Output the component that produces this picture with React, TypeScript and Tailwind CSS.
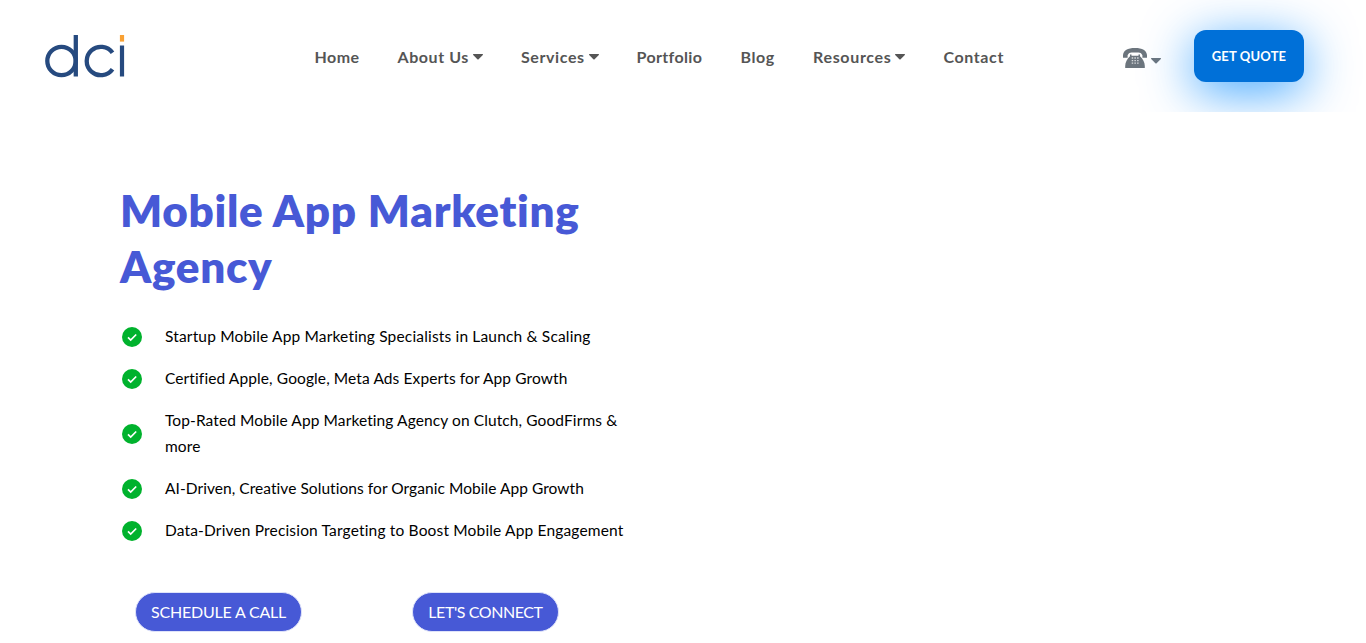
import React from "react";

const nav: { label: string; menu?: boolean; box: string; text: string }[] = [
  { label: "Home", box: "w-[83px]", text: "tracking-[0.45px]" },
  { label: "About Us", menu: true, box: "w-[123.500px]", text: "tracking-[0.57px]" },
  { label: "Services", menu: true, box: "w-[115.500px]", text: "tracking-[0.6px]" },
  { label: "Portfolio", box: "w-[104px]", text: "tracking-[0.35px]" },
  { label: "Blog", box: "w-[72.500px]", text: "tracking-[0.6px]" },
  { label: "Resources", menu: true, box: "w-[130.500px]", text: "tracking-[0.67px]" },
  { label: "Contact", box: "w-[61px]", text: "tracking-[0.6px]" },
];

const points: { text: string; className: string }[] = [
  { text: "Startup Mobile App Marketing Specialists in Launch & Scaling", className: "tracking-[0.17px]" },
  { text: "Certified Apple, Google, Meta Ads Experts for App Growth", className: "tracking-[0.11px]" },
  { text: "Top-Rated Mobile App Marketing Agency on Clutch, GoodFirms & more", className: "tracking-[0.1px]" },
  { text: "AI-Driven, Creative Solutions for Organic Mobile App Growth", className: "tracking-[0.055px]" },
  { text: "Data-Driven Precision Targeting to Boost Mobile App Engagement", className: "tracking-[0.165px]" },
];

function Caret() {
  return (
    <svg width="10" height="6" viewBox="0 0 10 6" className="shrink-0" fill="currentColor">
      <path d="M.5 0h9q.8.2.3.9L5.6 5.3q-.6.5-1.2 0L.2.9Q-.3.2.5 0z" />
    </svg>
  );
}

function Logo() {
  return (
    <svg width="80" height="44" viewBox="0 0 80 44" fill="none">
      <g stroke="#264a7f" strokeWidth="4.300">
        <circle cx="16.500" cy="26" r="14.200" />
        <path d="M30.800 0v41.500" />
        <path d="M67.500 17.800A14.200 14.200 0 1 0 67.500 34.200" />
        <path d="M77 10.500v31" strokeWidth="4.200" />
      </g>
      <path fill="#f9a133" d="M74.900 0h4.200v6.600h-4.200z" />
    </svg>
  );
}

function Telephone() {
  return (
    <svg width="24" height="20" viewBox="0 0 24 20" fill="#6c757d">
      <path d="M0 9.800V7C.5 2.500 4.500 0 12 0s11.500 2.500 12 7v2.800h-4.600V7.300C18.500 5 17 4.400 15.500 4.400h-7C7 4.400 5.500 5 4.600 7.300v2.500z" />
      <path d="M7 6.400h1.500v1.400h7V6.400H17v1.800c2.800 2.600 4.800 6.200 4.800 9.800v2H2.200v-2C2.200 14.400 4.200 10.800 7 8.200z" />
      <path stroke="#d5d8da" strokeWidth="1.300" strokeDasharray="1.500 1.200" d="M8.700 10h6.900M8.700 12.600h6.900M8.700 15.200h6.900" />
    </svg>
  );
}

function Check() {
  return (
    <svg width="20" height="20" viewBox="0 0 20 20" className="shrink-0">
      <circle cx="10" cy="10" r="10" fill="#00b22d" />
      <path d="m6 10.300 2.700 2.700L14.200 7.500" fill="none" stroke="#fff" strokeWidth="1.700" />
    </svg>
  );
}

export default function App() {
  return (
    <div className="h-[643px] overflow-hidden bg-white font-['Lato',sans-serif] [font-variant-ligatures:none]">
      <header className="flex h-28 overflow-hidden pl-[45px]">
        <a href="#" aria-label="dci" className="w-[269.500px] pt-[35px]">
          <Logo />
        </a>
        <nav className="flex h-[114px] items-center text-[16px] font-bold text-[#555]">
          {nav.map((n) => (
            <a key={n.label} href="#" className={`flex items-center gap-1 whitespace-nowrap ${n.box}`}>
              <span className={n.text}>{n.label}</span>
              {n.menu && <Caret />}
            </a>
          ))}
        </nav>
        <a href="#" aria-label="Call us" className="mt-12 ml-[118.500px] flex h-5 w-[71px] items-center gap-1 text-[#6c757d]">
          <Telephone />
          <span className="pt-[5px]"><Caret /></span>
        </a>
        <a href="#" className="mt-[30px] flex h-[52px] w-[110px] items-center justify-center rounded-xl bg-[#0070d8] pt-0.5 text-[13px] font-bold tracking-[0.15px] whitespace-nowrap text-white shadow-[0_10px_50px_#0088ffc0]">
          <span>GET QUOTE</span>
        </a>
      </header>
      <main className="pl-[120px]">
        <h1 className="w-[510px] pt-[70px] text-[44px] leading-[56px] font-extrabold tracking-[0.7px] text-[#4759d6]">Mobile App Marketing Agency</h1>
        <ul className="flex w-[510px] flex-col gap-4 pt-[29px]">
          {points.map((p) => (
            <li key={p.text} className="flex items-center gap-[23px] pl-[2px]">
              <span className="shrink-0 pt-0.5"><Check /></span>
              <span className={`text-[15.500px] leading-[26px] text-black ${p.className}`}>{p.text}</span>
            </li>
          ))}
        </ul>
        <div className="flex gap-[110px] pt-[49px] pl-[15px] text-[16px] text-white">
          <a href="#" className="flex h-10 w-[167px] items-center justify-center rounded-full border border-[#dfe3fa] bg-[#4759d6] tracking-[-0.2px]">SCHEDULE A CALL</a>
          <a href="#" className="flex h-10 w-[147px] items-center justify-center rounded-full border border-[#dfe3fa] bg-[#4759d6] tracking-[-0.42px]">LET'S CONNECT</a>
        </div>
      </main>
    </div>
  );
}
